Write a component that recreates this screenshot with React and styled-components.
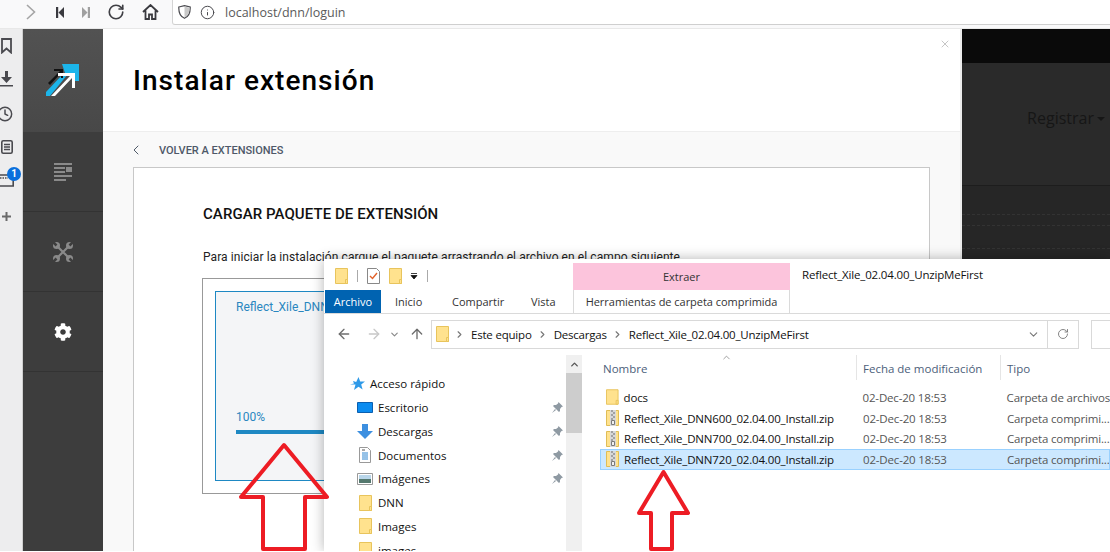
import styled, { createGlobalStyle } from "styled-components";
import { Clock, RotateCw, Info, ChevronRight, ChevronLeft, ChevronDown, ChevronUp, X, ArrowLeft, ArrowRight, ArrowUp } from "lucide-react";
import { FaCog } from "react-icons/fa";

const Global = createGlobalStyle`
  html, body { margin: 0; padding: 0; background: #fff; }
  * { box-sizing: border-box; }
`;

const Page = styled.div`
  position: relative;
  width: 1110px;
  height: 551px;
  overflow: hidden;
  display: flex;
  flex-direction: column;
  font-family: Roboto, sans-serif;
`;

const Toolbar = styled.div`
  height: 29px;
  flex: none;
  display: flex;
  align-items: flex-start;
  background: #f9f9fa;
  border-bottom: 1px solid #e8e8e8;
`;

const ToolIcons = styled.div`
  width: 172px;
  height: 24px;
  flex: none;
  display: flex;
  align-items: center;
  padding-left: 21px;
  color: #3f3f44;
`;

const ToolSlot = styled.div`
  width: ${(p) => p.$w}px;
  display: flex;
  justify-content: center;
`;

const UrlBar = styled.div`
  flex: 1;
  height: 25px;
  background: #fff;
  border-left: 1px solid #d4d4d4;
  border-bottom: 1px solid #cfcfcf;
  border-bottom-left-radius: 3px;
  display: flex;
  align-items: center;
  padding-left: 5px;
  gap: 7px;
  color: #4a4a4f;
`;

const UrlText = styled.span`
  margin-left: 3px;
  font: 12.5px "Open Sans", sans-serif;
  color: #5a5a5a;
`;

const Workspace = styled.div`
  flex: 1;
  display: flex;
  min-height: 0;
`;

const Rail = styled.div`
  width: 23px;
  flex: none;
  background: #ededee;
  border-right: 1px solid #cfcfcf;
  display: flex;
  flex-direction: column;
  align-items: flex-start;
  padding-top: 9px;
  color: #4a4a4f;
`;

const RailSlot = styled.div`
  position: relative;
  height: ${(p) => p.$h}px;
  width: 22px;
  display: flex;
  align-items: flex-start;
`;

const Badge = styled.span`
  position: absolute;
  left: 7px;
  top: -7px;
  width: 14px;
  height: 14px;
  border-radius: 50%;
  background: #0a6fdc;
  color: #fff;
  font: 700 10px/14px Roboto, sans-serif;
  text-align: center;
`;

const SideNav = styled.div`
  width: 80px;
  flex: none;
  background: #3d3d3d;
  display: flex;
  flex-direction: column;
`;

const LogoCell = styled.div`
  height: 103px;
  background: linear-gradient(#525252, #484848);
  display: flex;
  align-items: center;
  justify-content: center;
  padding-bottom: 3px;
`;

const NavCell = styled.div`
  height: 80px;
  display: flex;
  align-items: center;
  justify-content: center;
  border-bottom: 1px solid #333;
  color: ${(p) => (p.$active ? "#fff" : "#8a8a8a")};
`;

const Panel = styled.div`
  width: 859px;
  flex: none;
  position: relative;
  background: #f9f9f9;
  border-right: 2px solid #ececec;
  overflow: hidden;
`;

const PanelHead = styled.div`
  height: 103px;
  background: #fff;
  border-bottom: 1px solid #eee;
  padding: 33px 0 0 30px;
`;

const Title = styled.h1`
  margin: 0;
  font: 500 28px/38px Roboto, sans-serif;
  letter-spacing: 1.05px;
  color: #000;
`;

const CloseBtn = styled.div`
  position: absolute;
  top: 9px;
  right: 9px;
  color: #8c8c8c;
  display: flex;
`;

const BackRow = styled.div`
  height: 35px;
  padding: 1px 0 0 28px;
  display: flex;
  align-items: center;
  gap: 15px;
  color: #4e5a68;
`;

const BackLabel = styled.span`
  font: 500 11px Roboto, sans-serif;
  color: #4e5868;
`;

const Card = styled.div`
  width: 797px;
  height: 500px;
  margin-left: 30px;
  background: #fff;
  border: 1px solid #c8c8c8;
  padding: 37px 69px 0 69px;
`;

const CardHeading = styled.h2`
  margin: 0;
  font: 500 15px/18px Roboto, sans-serif;
  letter-spacing: 0.07px;
  color: #111;
`;

const CardText = styled.p`
  margin: 25px 0 0;
  font: 12px/18px Roboto, sans-serif;
  letter-spacing: 0.08px;
  color: #222;
  white-space: nowrap;
`;

const DropBox = styled.div`
  margin: 12px 0 0 -1px;
  height: 216px;
  border: 1px solid #999;
  padding: 12px;
`;

const DropInner = styled.div`
  height: 190px;
  background: #f4f5f7;
  border: 1px solid #1e88c3;
  padding: 7px 20px 0;
  display: flex;
  flex-direction: column;
`;

const FileLabel = styled.div`
  font: 12px/16px Roboto, sans-serif;
  color: #2a87c0;
`;

const Percent = styled(FileLabel)`
  margin-top: auto;
`;

const ProgressBar = styled.div`
  height: 4px;
  margin: 5px 0 46px;
  background: #1e88c3;
`;

const Backdrop = styled.div`
  flex: 1;
  background: #262626;
  display: flex;
  flex-direction: column;
`;

const BlackBand = styled.div`
  height: 34px;
  background: #0a0a0a;
`;

const MenuBand = styled.div`
  height: 123px;
  background: #2a2a2a;
  border-bottom: 1px solid #1d1d1d;
  display: flex;
  justify-content: flex-end;
  align-items: center;
  padding: 0 5px 13px 0;
  gap: 3px;
  color: #161616;
  font: 16px "Open Sans", sans-serif;
`;

const Caret = styled.span`
  margin-top: 2px;
  border-top: 4px solid #161616;
  border-left: 4px solid transparent;
  border-right: 4px solid transparent;
`;

const DashRow = styled.div`
  height: ${(p) => p.$h}px;
  border-bottom: 1px dashed #333;
`;

/* explorer window sitting on top of the browser */
const Explorer = styled.div`
  position: absolute;
  left: 324px;
  top: 259px;
  width: 786px;
  height: 292px;
  background: #fff;
  box-shadow: 0 0 12px rgba(0, 0, 0, 0.3);
  display: flex;
  flex-direction: column;
  font: 11.5px "Open Sans", sans-serif;
  color: #111;
`;

const Ribbon = styled.div`
  height: 55px;
  flex: none;
  display: flex;
  border-bottom: 1px solid #dadada;
`;

const RibbonLeft = styled.div`
  width: 249px;
  flex: none;
  display: flex;
  flex-direction: column;
`;

const QuickBar = styled.div`
  height: 31px;
  display: flex;
  align-items: center;
  padding: 2px 0 0 11px;
`;

const QuickSep = styled.span`
  width: 1px;
  height: 12px;
  background: #aaa;
  margin: ${(p) => p.$m};
`;

const Tabs = styled.div`
  flex: 1;
  display: flex;
`;

const Tab = styled.div`
  width: ${(p) => p.$w}px;
  padding-left: ${(p) => p.$pl ?? 0}px;
  display: flex;
  align-items: center;
  justify-content: ${(p) => (p.$active ? "center" : "flex-start")};
  background: ${(p) => (p.$active ? "#0063b1" : "transparent")};
  color: ${(p) => (p.$active ? "#fff" : "#333")};
  margin-left: ${(p) => (p.$active ? "1px" : "0")};
  font-size: 11px;
`;

const ContextGroup = styled.div`
  width: 217px;
  flex: none;
  margin-top: 4px;
  display: flex;
  flex-direction: column;
`;

const ContextHead = styled.div`
  height: 27px;
  background: #fcc4dc;
  display: flex;
  align-items: center;
  justify-content: center;
  font-size: 11px;
  color: #333;
`;

const ContextTab = styled.div`
  flex: 1;
  border-left: 1px solid #dadada;
  border-right: 1px solid #dadada;
  display: flex;
  align-items: center;
  justify-content: center;
  font-size: 11px;
  letter-spacing: -0.03px;
  color: #333;
`;

const WindowTitle = styled.div`
  padding: 8px 0 0 12px;
  line-height: 16px;
  letter-spacing: -0.17px;
`;

const AddressRow = styled.div`
  height: 41px;
  flex: none;
  display: flex;
  align-items: center;
  padding-bottom: 1px;
`;

const NavButtons = styled.div`
  width: 107px;
  flex: none;
  display: flex;
  align-items: center;
  padding-left: 12px;
  color: #777;
`;

const NavBtn = styled.span`
  display: flex;
  margin-right: ${(p) => p.$mr}px;
  color: ${(p) => p.$color || "#6d6d6d"};
`;

const AddressBox = styled.div`
  width: 648px;
  height: 29px;
  flex: none;
  border: 1px solid #d9d9d9;
  display: flex;
  align-items: center;
  padding-left: 4px;
`;

const Crumb = styled.span`
  display: flex;
  align-items: center;
  margin-left: 5px;
  color: #777;
`;

const CrumbText = styled.span`
  margin-left: 6px;
  letter-spacing: -0.2px;
  color: #111;
`;

const AddressEnd = styled.div`
  margin-left: auto;
  display: flex;
  height: 100%;
  align-items: center;
  color: #777;
`;

const RefreshCell = styled.div`
  width: 31px;
  height: 100%;
  margin-left: 7px;
  border-left: 1px solid #d9d9d9;
  display: flex;
  align-items: center;
  justify-content: center;
`;

const SearchBox = styled.div`
  margin-left: 12px;
  flex: 1;
  height: 29px;
  border: 1px solid #d9d9d9;
  border-right: none;
`;

const ExplorerBody = styled.div`
  flex: 1;
  display: flex;
  min-height: 0;
`;

const TreePane = styled.div`
  width: 242px;
  flex: none;
  padding: 17px 0 0 25px;
  overflow: hidden;
`;

const TreeRow = styled.div`
  height: 23.75px;
  display: flex;
  align-items: center;
  padding-left: ${(p) => (p.$top ? 0 : 8)}px;
  gap: 5px;
  white-space: nowrap;
`;

const TreeIcon = styled.span`
  width: 16px;
  display: flex;
  justify-content: center;
  flex: none;
`;

const PinSlot = styled.span`
  margin-left: auto;
  margin-right: 3px;
  display: flex;
`;

const ScrollTrack = styled.div`
  width: 16px;
  flex: none;
  background: #f0f0f0;
  display: flex;
  flex-direction: column;
  color: #555;
`;

const ScrollArrow = styled.div`
  height: 18px;
  display: flex;
  align-items: center;
  justify-content: center;
`;

const ScrollThumb = styled.div`
  height: 60px;
  background: #cdcdcd;
`;

const FilesPane = styled.div`
  flex: 1;
  min-width: 0;
`;

const ColumnHead = styled.div`
  position: relative;
  height: 25px;
  display: flex;
  align-items: stretch;
  padding-left: 14px;
  color: #4c607a;
`;

const SortArrow = styled.span`
  position: absolute;
  left: 139px;
  top: -3px;
  display: flex;
  color: #777;
`;

const ColumnCell = styled.div`
  width: ${(p) => p.$w}px;
  padding: 6px 0 0 ${(p) => p.$pl}px;
  border-right: ${(p) => (p.$last ? "none" : "1px solid #e5e5e5")};
  flex: none;
  white-space: nowrap;
`;

const FileList = styled.div`
  padding: 7px 0 0 18px;
`;

const FileRow = styled.div`
  height: 20.7px;
  display: flex;
  align-items: center;
  padding-left: 6px;
  background: ${(p) => (p.$selected ? "#cce8ff" : "transparent")};
  outline: ${(p) => (p.$selected ? "1px solid #99d1ff" : "none")};
  outline-offset: -1px;
  white-space: nowrap;
`;

const FileName = styled.span`
  width: 244px;
  padding-left: 5px;
  flex: none;
  overflow: hidden;
  letter-spacing: -0.17px;
`;

const FileDate = styled.span`
  width: 144px;
  flex: none;
  letter-spacing: -0.17px;
  color: #555;
`;

const FileType = styled.span`
  flex: none;
  letter-spacing: -0.16px;
  color: #555;
`;

const ArrowMark = styled.svg`
  position: absolute;
  left: ${(p) => p.$x}px;
  top: ${(p) => p.$y}px;
  overflow: visible;
`;

const FolderIcon = ({ w = 13, h = 16 }) => (
  <svg width={w} height={h} viewBox="0 0 13 16">
    <path d="M.5.5h12v15H.5z" fill="#ffe28e" stroke="#e8c45c" />
    <path d="M10.5 11.5h2v4h-2z" fill="#ffe28e" stroke="#e8c45c" />
  </svg>
);

const ZipIcon = () => (
  <svg width="13" height="16" viewBox="0 0 13 16">
    <path d="M.5.5h12v15H.5z" fill="#ffe28e" stroke="#e0bd55" />
    <path d="M4 0h6v16H4z" fill="#d8d8d8" />
    <path d="M5 1h2M7 3h2M5 5h2M7 7h2M5 9h2" stroke="#6a6a6a" />
    <path d="M5.500 10.500h3v4h-3z" fill="#f0f0f0" stroke="#7a7a7a" />
  </svg>
);

const StarIcon = () => (
  <svg width="15" height="14" viewBox="0 0 15 14">
    <path d="M8.500 0l1.700 4.600H15l-3.800 3 1.400 5L8.500 9.800 4 13l1.500-5.400L0 7.500l4-1-1-2.500 3.200 1z" fill="#2f9ae8" />
  </svg>
);

const DesktopIcon = () => (
  <svg width="16" height="11" viewBox="0 0 16 11">
    <path d="M.5.5h15v10H.5z" fill="#0b8cf0" stroke="#0a5fb0" />
  </svg>
);

const DownIcon = () => (
  <svg width="16" height="15" viewBox="0 0 16 15">
    <path d="M5 0h6v7h5l-8 8-8-8h5z" fill="#3c8fe0" />
  </svg>
);

const DocIcon = () => (
  <svg width="12" height="16" viewBox="0 0 12 16">
    <path d="M.5.5h8l3 3v12H.5z" fill="#fff" stroke="#999" />
    <path d="M3 6h6M3 8h6M3 10h6M3 12h6" stroke="#2f86d0" />
    <path d="M3 3h3" stroke="#555" />
  </svg>
);

const PictureIcon = () => (
  <svg width="16" height="12" viewBox="0 0 16 12">
    <path d="M.5.5h15v11H.5z" fill="#fff" stroke="#999" />
    <path d="M2 2h12v4H2z" fill="#b9d6ea" />
    <path d="M2 6h12v4H2z" fill="#54786e" />
  </svg>
);

const PinIcon = () => (
  <svg width="11" height="11" viewBox="0 0 11 11">
    <path d="M6.500 0L11 4.500 9.500 5 8 7v2L7 10 1 4l1-1h2l2-1.500zM3 7l-3 4 4-3z" fill="#8f9aa3" />
  </svg>
);

const ToolsIcon = () => (
  <svg width="20" height="20" viewBox="0 0 20 20">
    <path d="M3.500 3.500l13 13M16.500 3.500l-13 13" stroke="#8a8a8a" strokeWidth="2.200" />
    <g fill="#8a8a8a">
      <circle cx="3.500" cy="3.500" r="3.500" />
      <circle cx="16.500" cy="3.500" r="3.500" />
      <circle cx="3.500" cy="16.500" r="3.500" />
      <circle cx="16.500" cy="16.500" r="3.500" />
    </g>
    <path d="M0 0l3.500 3.500M20 0l-3.500 3.500M0 20l3.500-3.500M20 20l-3.500-3.500" stroke="#3d3d3d" strokeWidth="2.600" />
  </svg>
);

const UpArrow = ({ x, y, w, h, shaftL, shaftR, headY, stroke = 4 }) => (
  <ArrowMark $x={x} $y={y} width={w} height={h}>
    <path
      d={`M${w / 2} 0 L${w} ${headY} H${shaftR} V${h} H${shaftL} V${headY} H0 Z`}
      fill="none"
      stroke="#ed1c24"
      strokeWidth={stroke}
      strokeLinejoin="round"
    />
  </ArrowMark>
);

const treeItems = [
  { name: "Escritorio", icon: <DesktopIcon />, pin: true },
  { name: "Descargas", icon: <DownIcon />, pin: true },
  { name: "Documentos", icon: <DocIcon />, pin: true },
  { name: "Imágenes", icon: <PictureIcon />, pin: true },
  { name: "DNN", icon: <FolderIcon /> },
  { name: "Images", icon: <FolderIcon /> },
  { name: "images", icon: <FolderIcon /> },
];

const files = [
  { name: "docs", type: "Carpeta de archivos", folder: true },
  { name: "Reflect_Xile_DNN600_02.04.00_Install.zip", type: "Carpeta comprimi..." },
  { name: "Reflect_Xile_DNN700_02.04.00_Install.zip", type: "Carpeta comprimi..." },
  { name: "Reflect_Xile_DNN720_02.04.00_Install.zip", type: "Carpeta comprimi...", selected: true },
];

function App() {
  return (
    <Page>
      <Global />
      <Toolbar>
        <ToolIcons>
          <ToolSlot $w={19}>
            <svg width="10" height="16" viewBox="0 0 10 16" fill="none" stroke="#a5a5a5" strokeWidth="1.600">
              <path d="M1 1l7.500 7L1 15" />
            </svg>
          </ToolSlot>
          <ToolSlot $w={40}>
            <svg width="8" height="11" viewBox="0 0 8 11">
              <path d="M0 0h2.200v11H0zM8 0v11L2.500 5.500z" fill="#3a3a3f" />
            </svg>
          </ToolSlot>
          <ToolSlot $w={12}>
            <svg width="8" height="11" viewBox="0 0 8 11">
              <path d="M8 0H5.800v11H8zM0 0v11l5.500-5.500z" fill="#a0a0a0" />
            </svg>
          </ToolSlot>
          <ToolSlot $w={47}>
            <RotateCw size={18} strokeWidth={2.200} />
          </ToolSlot>
          <ToolSlot $w={22}>
            <svg width="17" height="16" viewBox="0 0 17 16" fill="none" stroke="#3a3a3f" strokeWidth="1.800">
              <path d="M1 8l7.500-7L16 8M3.500 6.500V15H7v-4.500h3V15h3.500V6.500" />
            </svg>
          </ToolSlot>
        </ToolIcons>
        <UrlBar>
          <svg width="13" height="14" viewBox="0 0 13 14">
            <path d="M.8 2L6.500.7 12.200 2c.2 5-1.300 9.500-5.700 11.300C2.100 11.500.6 7 .8 2z" fill="none" stroke="#4a4a4f" strokeWidth="1.200" />
            <path d="M6.500 1.500L11.500 2.700c0 4-1.200 8-5 9.700z" fill="#c8c8c8" />
          </svg>
          <Info size={15} strokeWidth={1.600} style={{ marginLeft: 2 }} />
          <UrlText>localhost/dnn/loguin</UrlText>
        </UrlBar>
      </Toolbar>
      <Workspace>
        <Rail>
          <RailSlot $h={33}>
            <svg width="11" height="16" viewBox="0 0 11 16" fill="none" stroke="#4a4a4f" strokeWidth="1.800" style={{ marginLeft: 1 }}>
              <path d="M1 1h9v13.500l-4.500-4-4.500 4z" />
            </svg>
          </RailSlot>
          <RailSlot $h={35}>
            <svg width="13" height="16" viewBox="0 0 13 16" fill="#4a4a4f">
              <path d="M5 0h3v6h4l-5.500 6L1 6h4zM0 14h13v1.600H0z" />
            </svg>
          </RailSlot>
          <RailSlot $h={34}>
            <Clock size={16} strokeWidth={2.200} style={{ marginLeft: -3 }} />
          </RailSlot>
          <RailSlot $h={34}>
            <svg width="12" height="14" viewBox="0 0 12 14" fill="none" stroke="#4a4a4f" strokeWidth="1.600" style={{ marginLeft: 1 }}>
              <rect x=".8" y=".8" width="10.400" height="12.400" rx="1.500" />
              <path d="M3 4.500h6M3 7h6M3 9.500h6" />
            </svg>
          </RailSlot>
          <RailSlot $h={38}>
            <svg width="14" height="14" viewBox="0 0 14 14" fill="none" stroke="#4a4a4f" strokeWidth="1.600">
              <path d="M0 1h13.200v11H0" />
              <path d="M0 4h8" strokeDasharray="1.500 1" />
            </svg>
            <Badge>1</Badge>
          </RailSlot>
          <RailSlot $h={20}>
            <svg width="9" height="9" viewBox="0 0 9 9" stroke="#6a6a6a" strokeWidth="2" style={{ marginLeft: 2 }}>
              <path d="M4.500 0v9M0 4.500h9" />
            </svg>
          </RailSlot>
        </Rail>
        <SideNav>
          <LogoCell>
            <svg width="34" height="33" viewBox="0 0 34 33">
              <path d="M16 1H33V18H29V10H19Z" fill="#1cb5ea" />
              <path d="M0 29L17 11h5L4 33H0Z" fill="#1cb5ea" />
              <path d="M2 20L14 8H8V6H17V15H15V10L4 22Z" fill="#111" />
              <path d="M5 33L24 13H12V10H29V25H26V15L9 33Z" fill="#fff" />
            </svg>
          </LogoCell>
          <NavCell>
            <svg width="18" height="18" viewBox="0 0 18 18" fill="#8a8a8a">
              <path d="M0 0h18v2H0zM0 4h11v2H0zM12 4h6v5h-6zM0 8h11v2H0zM0 12h18v2H0zM0 16h12v2H0z" />
            </svg>
          </NavCell>
          <NavCell>
            <ToolsIcon />
          </NavCell>
          <NavCell $active>
            <FaCog size={18} />
          </NavCell>
        </SideNav>
        <Panel>
          <PanelHead>
            <Title>Instalar extensión</Title>
          </PanelHead>
          <CloseBtn>
            <X size={12} strokeWidth={1} />
          </CloseBtn>
          <BackRow>
            <ChevronLeft size={16} strokeWidth={1.500} style={{ marginLeft: -3 }} />
            <BackLabel>VOLVER A EXTENSIONES</BackLabel>
          </BackRow>
          <Card>
            <CardHeading>CARGAR PAQUETE DE EXTENSIÓN</CardHeading>
            <CardText>Para iniciar la instalación cargue el paquete arrastrando el archivo en el campo siguiente.</CardText>
            <DropBox>
              <DropInner>
                <FileLabel>Reflect_Xile_DNN720_02.04.00_Install.zip</FileLabel>
                <Percent>100%</Percent>
                <ProgressBar />
              </DropInner>
            </DropBox>
          </Card>
        </Panel>
        <Backdrop>
          <BlackBand />
          <MenuBand>
            Registrar
            <Caret />
          </MenuBand>
          <DashRow $h={29} />
          <DashRow $h={11} />
          <DashRow $h={23} />
        </Backdrop>
      </Workspace>

      <Explorer>
        <Ribbon>
          <RibbonLeft>
            <QuickBar>
              <FolderIcon />
              <QuickSep $m="0 9px 0 9px" />
              <svg width="13" height="16" viewBox="0 0 13 16">
                <path d="M.5.5h9l3 3v12H.5z" fill="#fff" stroke="#888" />
                <path d="M3 8l2.500 2.500L10 5" fill="none" stroke="#e2622a" strokeWidth="1.400" />
              </svg>
              <span style={{ width: 9 }} />
              <FolderIcon />
              <svg width="8" height="6" viewBox="0 0 8 6" style={{ marginLeft: 8 }}>
                <path d="M1 .5h6M1 2.500h6L4 6z" stroke="#111" fill="#111" strokeWidth=".8" />
              </svg>
              <QuickSep $m="0 0 0 9px" />
            </QuickBar>
            <Tabs>
              <Tab $w={56} $active>Archivo</Tab>
              <Tab $w={57} $pl={14}>Inicio</Tab>
              <Tab $w={79} $pl={14}>Compartir</Tab>
              <Tab $w={56} $pl={14}>Vista</Tab>
            </Tabs>
          </RibbonLeft>
          <ContextGroup>
            <ContextHead>Extraer</ContextHead>
            <ContextTab>Herramientas de carpeta comprimida</ContextTab>
          </ContextGroup>
          <WindowTitle>Reflect_Xile_02.04.00_UnzipMeFirst</WindowTitle>
        </Ribbon>
        <AddressRow>
          <NavButtons>
            <NavBtn $mr={14}><ArrowLeft size={16} strokeWidth={2} /></NavBtn>
            <NavBtn $mr={7} $color="#c8c8c8"><ArrowRight size={16} strokeWidth={2} /></NavBtn>
            <NavBtn $mr={9} $color="#888"><ChevronDown size={11} strokeWidth={2.500} /></NavBtn>
            <NavBtn $mr={0}><ArrowUp size={16} strokeWidth={2} /></NavBtn>
          </NavButtons>
          <AddressBox>
            <FolderIcon />
            <Crumb><ChevronRight size={11} strokeWidth={2.500} /></Crumb>
            <CrumbText>Este equipo</CrumbText>
            <Crumb><ChevronRight size={11} strokeWidth={2.500} /></Crumb>
            <CrumbText>Descargas</CrumbText>
            <Crumb><ChevronRight size={11} strokeWidth={2.500} /></Crumb>
            <CrumbText>Reflect_Xile_02.04.00_UnzipMeFirst</CrumbText>
            <AddressEnd>
              <ChevronDown size={13} strokeWidth={2} />
              <RefreshCell><RotateCw size={12} strokeWidth={1.800} /></RefreshCell>
            </AddressEnd>
          </AddressBox>
          <SearchBox />
        </AddressRow>
        <ExplorerBody>
          <TreePane>
            <TreeRow $top>
              <TreeIcon><StarIcon /></TreeIcon>
              Acceso rápido
            </TreeRow>
            {treeItems.map((item) => (
              <TreeRow key={item.name}>
                <TreeIcon>{item.icon}</TreeIcon>
                {item.name}
                {item.pin && <PinSlot><PinIcon /></PinSlot>}
              </TreeRow>
            ))}
          </TreePane>
          <ScrollTrack>
            <ScrollArrow><ChevronUp size={11} strokeWidth={3} /></ScrollArrow>
            <ScrollThumb />
          </ScrollTrack>
          <FilesPane>
            <ColumnHead>
              <SortArrow><ChevronUp size={11} strokeWidth={1.500} /></SortArrow>
              <ColumnCell $w={261} $pl={7}>Nombre</ColumnCell>
              <ColumnCell $w={144} $pl={6}>Fecha de modificación</ColumnCell>
              <ColumnCell $w={100} $pl={6} $last>Tipo</ColumnCell>
            </ColumnHead>
            <FileList>
              {files.map((file) => (
                <FileRow key={file.name} $selected={file.selected}>
                  {file.folder ? <FolderIcon /> : <ZipIcon />}
                  <FileName>{file.name}</FileName>
                  <FileDate>02-Dec-20 18:53</FileDate>
                  <FileType>{file.type}</FileType>
                </FileRow>
              ))}
            </FileList>
          </FilesPane>
        </ExplorerBody>
      </Explorer>

      <UpArrow x={241} y={445} w={86} h={104} shaftL={22} shaftR={64} headY={52} />
      <UpArrow x={639} y={472} w={49} h={77} shaftL={12} shaftR={33} headY={41} />
    </Page>
  );
}

export default App;
